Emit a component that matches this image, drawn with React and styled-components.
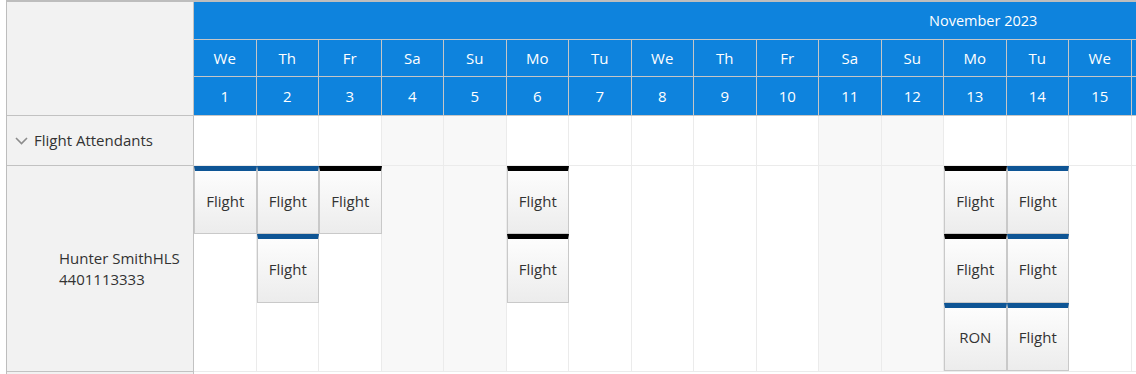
import React from "react";
import styled, { createGlobalStyle } from "styled-components";

const GlobalStyle = createGlobalStyle`
  body {
    margin: 0;
    background: #fff;
    font-family: "Open Sans", "Segoe UI", sans-serif;
  }
`;

const SLOT = 62.5;
const DAY_NAMES = ["Su", "Mo", "Tu", "We", "Th", "Fr", "Sa"];
// November 2023 starts on a Wednesday; the view shows the first 15 days
const days = Array.from({ length: 15 }, (_, i) => {
  const dow = (3 + i) % 7;
  return { date: i + 1, name: DAY_NAMES[dow], weekend: dow === 0 || dow === 6 };
});

const BLUE_BAR = "#0e5595";
const BLACK_BAR = "#000";

const events = [
  { day: 1, lane: 1, title: "Flight", bar: BLUE_BAR },
  { day: 2, lane: 1, title: "Flight", bar: BLUE_BAR },
  { day: 3, lane: 1, title: "Flight", bar: BLACK_BAR },
  { day: 6, lane: 1, title: "Flight", bar: BLACK_BAR },
  { day: 13, lane: 1, title: "Flight", bar: BLACK_BAR },
  { day: 14, lane: 1, title: "Flight", bar: BLUE_BAR },
  { day: 2, lane: 2, title: "Flight", bar: BLUE_BAR },
  { day: 6, lane: 2, title: "Flight", bar: BLACK_BAR },
  { day: 13, lane: 2, title: "Flight", bar: BLACK_BAR },
  { day: 14, lane: 2, title: "Flight", bar: BLUE_BAR },
  { day: 13, lane: 3, title: "RON", bar: BLUE_BAR },
  { day: 14, lane: 3, title: "Flight", bar: BLUE_BAR },
];

const Scheduler = styled.div`
  margin-left: 6px;
  width: 1130px;
  height: 374px;
  box-sizing: border-box;
  display: grid;
  grid-template-columns: 187px 1fr;
  border-top: 2px solid #bdbdbd;
  border-left: 1px solid #bdbdbd;
  overflow: hidden;
`;

const ResourcePane = styled.div`
  display: grid;
  grid-template-rows: 114px 50px 206px;
  background: #f2f2f2;
  border-right: 1px solid #c2c2c2;
`;

const PaneCell = styled.div`
  box-sizing: border-box;
  border-bottom: 1px solid #c2c2c2;
  display: flex;
  align-items: center;
  padding-left: ${(p) => p.$indent || 0}px;
  color: #333;
  font-size: 15px;
  line-height: 21px;
`;

const Chevron = styled.svg`
  margin-right: 6px;
  flex-shrink: 0;
`;

const Timeline = styled.div`
  display: flex;
  flex-direction: column;
  min-width: 0;
`;

const MonthRow = styled.div`
  height: 38px;
  box-sizing: border-box;
  display: flex;
  align-items: center;
  padding-left: 735px;
  background: #0e83dd;
  border-bottom: 1px solid #c6c6c6;
  color: #fff;
  font-size: 14.5px;
  white-space: nowrap;
`;

const SlotRow = styled.div`
  display: grid;
  grid-template-columns: repeat(${days.length}, ${SLOT}px);
  height: ${(p) => p.$height}px;
  box-sizing: border-box;
  flex-shrink: 0;
  background: ${(p) => (p.$header ? "#0e83dd" : "#fff")};
  border-bottom: 1px solid ${(p) => (p.$header ? "#c6c6c6" : "#ebebeb")};
  ${(p) => p.$lanes && `grid-template-rows: repeat(${p.$lanes}, 1fr);`}
`;

const HeaderCell = styled.div`
  border-right: 1px solid #c6c6c6;
  display: flex;
  align-items: center;
  justify-content: center;
  color: #fff;
  font-size: 15px;
`;

const WorkCell = styled.div`
  grid-column: ${(p) => p.$col};
  grid-row: 1 / -1;
  border-right: 1px solid #ebebeb;
  background: ${(p) => (p.$weekend ? "#f8f8f8" : "#fff")};
`;

const Event = styled.div`
  grid-column: ${(p) => p.$day};
  grid-row: ${(p) => p.$lane};
  z-index: 1;
  box-sizing: border-box;
  border: 1px solid #c9c9c9;
  border-top: 5px solid ${(p) => p.$bar};
  background: linear-gradient(#fdfdfd, #ececec);
  display: flex;
  align-items: center;
  justify-content: center;
  padding-bottom: 3px;
  color: #333;
  font-size: 15px;
`;

export default function App() {
  return (
    <>
      <GlobalStyle />
      <Scheduler>
        <ResourcePane>
          <PaneCell />
          <PaneCell $indent={8}>
            <Chevron width="13" height="8" viewBox="0 0 13 8">
              <polyline
                points="1,1 6.5,6.5 12,1"
                fill="none"
                stroke="#8c8c8c"
                strokeWidth="1.6"
              />
            </Chevron>
            Flight Attendants
          </PaneCell>
          <PaneCell $indent={52}>
            <div>
              Hunter SmithHLS
              <br />
              4401113333
            </div>
          </PaneCell>
        </ResourcePane>

        <Timeline>
          <MonthRow>November 2023</MonthRow>
          <SlotRow $header $height={37}>
            {days.map((d) => (
              <HeaderCell key={d.date}>{d.name}</HeaderCell>
            ))}
          </SlotRow>
          <SlotRow $header $height={39}>
            {days.map((d) => (
              <HeaderCell key={d.date}>{d.date}</HeaderCell>
            ))}
          </SlotRow>
          <SlotRow $height={50}>
            {days.map((d, i) => (
              <WorkCell key={d.date} $col={i + 1} $weekend={d.weekend} />
            ))}
          </SlotRow>
          <SlotRow $height={206} $lanes={3}>
            {days.map((d, i) => (
              <WorkCell key={d.date} $col={i + 1} $weekend={d.weekend} />
            ))}
            {events.map((e, i) => (
              <Event key={i} $day={e.day} $lane={e.lane} $bar={e.bar}>
                {e.title}
              </Event>
            ))}
          </SlotRow>
        </Timeline>
      </Scheduler>
    </>
  );
}
